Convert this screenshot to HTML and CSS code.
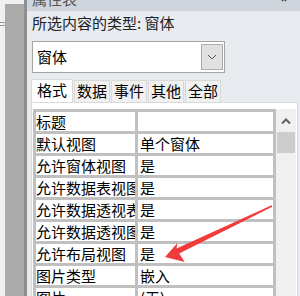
FILE: index.html
```html
<!DOCTYPE html>
<html lang="zh-CN">
<head>
    <meta charset="UTF-8">
    <meta name="viewport" content="width=device-width, initial-scale=1.0">
    <title>属性表</title>
    <link rel="stylesheet" href="styles.css">
</head>
<body>
    <div class="dock">
        <div class="dock-light">
            <div class="dock-line"></div>
            <div class="dock-line"></div>
        </div>
        <div class="dock-gray"></div>
        <div class="dock-edge"></div>
    </div>
    <div class="panel">
        <div class="title-bar">
            <span class="title">属性表</span>
            <svg class="close" width="8" height="4" viewBox="0 0 8 4"><path d="M1 -3 L5 1 M5 -3 L1 1" stroke="#444" stroke-width="1.4" fill="none"/></svg>
        </div>
        <div class="kind-label">所选内容的类型:&nbsp;窗体</div>
        <div class="combo">
            <span class="combo-text">窗体</span>
            <span class="combo-btn">
                <svg width="10" height="6" viewBox="0 0 10 6"><path d="M1 1 L5 5 L9 1" stroke="#555" stroke-width="1" fill="none"/></svg>
            </span>
        </div>
        <div class="tabs">
            <span class="tab active">格式</span>
            <span class="tab">数据</span>
            <span class="tab">事件</span>
            <span class="tab">其他</span>
            <span class="tab">全部</span>
        </div>
        <div class="sheet">
            <div class="grid">
                <div class="cell">标题</div><div class="cell"></div>
                <div class="cell">默认视图</div><div class="cell">单个窗体</div>
                <div class="cell">允许窗体视图</div><div class="cell">是</div>
                <div class="cell">允许数据表视图</div><div class="cell">是</div>
                <div class="cell">允许数据透视表视图</div><div class="cell">是</div>
                <div class="cell">允许数据透视图视图</div><div class="cell">是</div>
                <div class="cell">允许布局视图</div><div class="cell">是</div>
                <div class="cell">图片类型</div><div class="cell">嵌入</div>
                <div class="cell">图片</div><div class="cell">(无)</div>
            </div>
            <div class="scrollbar">
                <div class="scroll-up">
                    <svg width="10" height="6" viewBox="0 0 10 6"><path d="M1 5.5 L5 1.5 L9 5.5" stroke="#606060" stroke-width="2" fill="none"/></svg>
                </div>
                <div class="scroll-thumb"></div>
            </div>
        </div>
    </div>
    <svg class="arrow" width="300" height="296" viewBox="0 0 300 296">
        <polygon fill="#f23b3b" points="165,257 184.7,262 179.2,253.6 272.3,206.8 271.7,205.2 176.5,248.4 177.5,243"/>
    </svg>
</body>
</html>
```

FILE: styles.css
```css
body {
    margin: 0;
    width: 300px;
    height: 296px;
    overflow: hidden;
    display: flex;
    font-family: "Noto Sans CJK SC", "Microsoft YaHei", sans-serif;
    font-size: 15px;
    color: #000;
}
.dock {
    display: flex;
    width: 27px;
    flex-shrink: 0;
}
.dock-light {
    width: 5px;
    background-color: #f0f0f0;
    padding-top: 22px;
}
.dock-line {
    height: 1px;
    background-color: #9a9a9a;
    margin-bottom: 2px;
}
.dock-gray {
    width: 19px;
    background-color: #ababab;
    border-top: 4px solid #f0f0f0;
}
.dock-edge {
    width: 3px;
    background-color: #8e8e8e;
}
.panel {
    flex: 1;
    min-height: 0;
    background-color: #e8ebef;
    padding-left: 4px;
    display: flex;
    flex-direction: column;
}
.panel > * {
    flex-shrink: 0;
}
.title-bar {
    height: 11px;
    margin-left: -4px;
    padding-left: 5px;
    background-color: #cfd5dd;
    overflow: hidden;
    display: flex;
    justify-content: space-between;
}
.title {
    line-height: 15px;
    margin-top: -9px;
    color: #555;
}
.close {
    margin-right: 11px;
}
.kind-label {
    margin-top: 3px;
    margin-left: 1px;
    line-height: 18px;
    color: #222;
}
.combo {
    margin-top: 9px;
    width: 189px;
    height: 28px;
    padding: 1px;
    margin-left: 1px;
    border: 1px solid #a5a5a5;
    background-color: #fff;
    display: flex;
    align-items: center;
    justify-content: space-between;
}
.combo-text {
    padding-left: 3px;
    line-height: 20px;
}
.combo-btn {
    width: 20px;
    height: 24px;
    border: 1px solid #adadad;
    background-color: #e1e1e1;
    display: flex;
    align-items: center;
    justify-content: center;
}
.tabs {
    margin-top: 6px;
    display: flex;
    align-items: flex-end;
    height: 23px;
}
.tab {
    height: 21px;
    line-height: 20px;
    padding: 0 2px;
    margin-right: 1px;
    border: 1px solid #d9d9d9;
    border-bottom: none;
    background-color: #f0f0f0;
}
.tab.active {
    height: 22px;
    padding: 0 5px;
    background-color: #fff;
}
.sheet {
    flex: 1 1 auto;
    min-height: 0;
    overflow: hidden;
    margin-right: 2px;
    border: 1px solid #d9d9d9;
    border-bottom: none;
    background-color: #fff;
    padding: 6px 0 0 1px;
    display: flex;
    align-items: flex-start;
}
.grid {
    display: grid;
    grid-template-columns: 99px 135px;
    grid-auto-rows: 19px;
    gap: 3px;
    padding: 3px;
    background-color: #c0c0c0;
}
.cell {
    background-color: #fff;
    line-height: 19px;
    white-space: nowrap;
    overflow: hidden;
}
.cell:nth-child(2n) {
    padding-left: 2px;
}
.scrollbar {
    width: 20px;
    height: 190px;
    background-color: #f0f0f0;
    display: flex;
    flex-direction: column;
    align-items: center;
}
.scroll-up {
    height: 23px;
    display: flex;
    align-items: center;
    justify-content: center;
}
.scroll-thumb {
    width: 18px;
    height: 21px;
    background-color: #cdcdcd;
}
.arrow {
    position: absolute;
    left: 0;
    top: 0;
}
```
